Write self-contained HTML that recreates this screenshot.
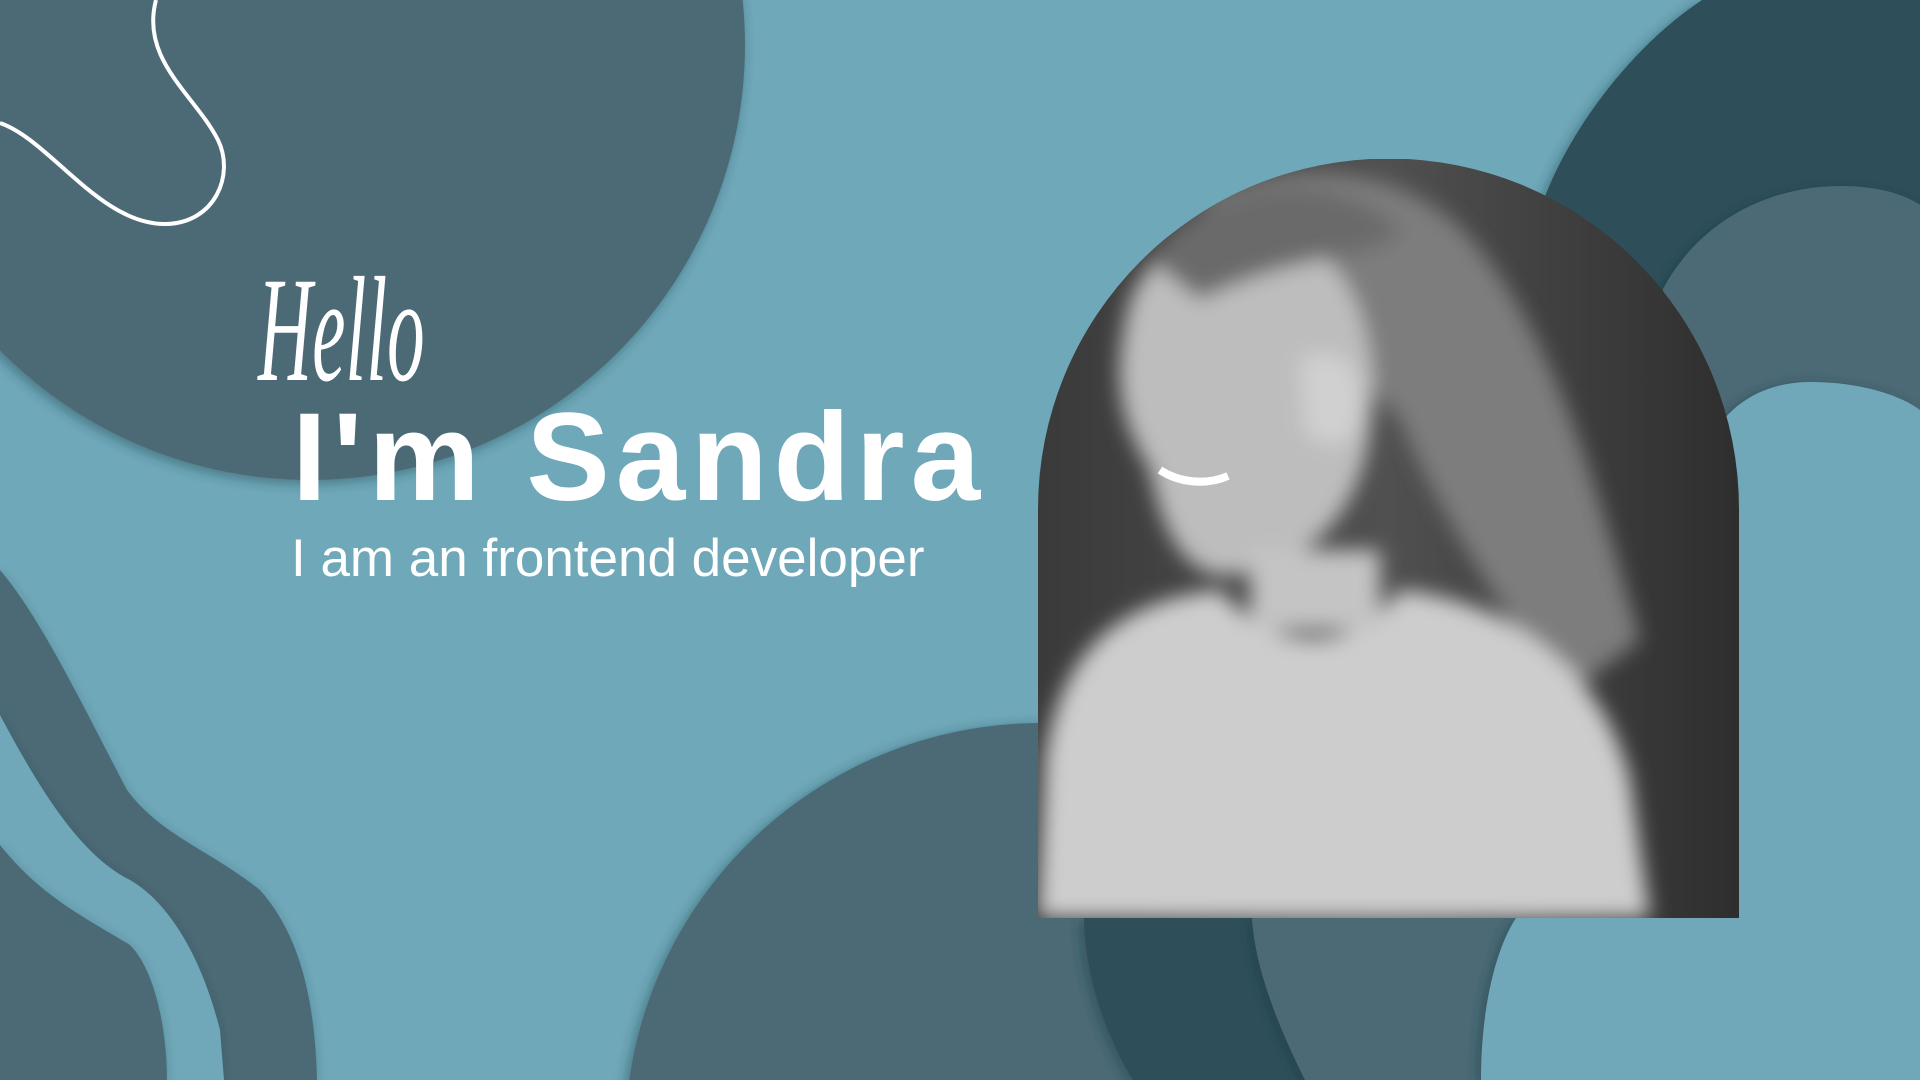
<!DOCTYPE html>
<html><head><meta charset="utf-8">
<style>
html,body{margin:0;padding:0;width:1920px;height:1080px;overflow:hidden;background:#6fa8b9;position:relative}
svg{position:absolute;left:0;top:0}
.t{position:absolute;color:#fff;font-family:"Liberation Sans",sans-serif;white-space:nowrap}
</style></head><body>
<svg width="1920" height="1080" viewBox="0 0 1920 1080">
<defs>
<filter id="sh" x="-20%" y="-20%" width="140%" height="140%"><feDropShadow dx="-3" dy="3" stdDeviation="6" flood-color="#1c3038" flood-opacity="0.45"/></filter>
<filter id="bl"><feGaussianBlur stdDeviation="10"/></filter>
<clipPath id="arch"><path d="M1038,918 L1038,509 A350,350 0 0 1 1739,509 L1739,918 Z"/></clipPath>
<linearGradient id="bg" x1="0" y1="0" x2="1" y2="0"><stop offset="0" stop-color="#3a3a3a"/><stop offset="0.5" stop-color="#505050"/><stop offset="1" stop-color="#2e2e2e"/></linearGradient>
</defs>
<rect width="1920" height="1080" fill="#6fa8b9"/>
<circle cx="310" cy="45" r="435" fill="#4b6b76" filter="url(#sh)"/>
<path d="M0,570 C40,617 80,700 127,790 C160,835 210,850 260,890 C300,935 315,1000 317,1080 L0,1080 Z" fill="#4b6b76" filter="url(#sh)"/>
<path d="M0,715 C40,790 80,855 130,880 C165,900 200,950 220,1030 L224,1080 L0,1080 Z" fill="#6fa8b9" filter="url(#sh)"/>
<path d="M0,845 C40,895 80,915 130,945 C155,970 167,1030 167,1080 L0,1080 Z" fill="#4b6b76" filter="url(#sh)"/>
<circle cx="1041" cy="1139" r="416" fill="#4b6b76" filter="url(#sh)"/>
<path d="M1702,0 C1628,49 1567,135 1543,202 L1543,918 L1084,918 C1084,967 1102,1030 1133,1080 L1920,1080 L1920,0 Z" fill="#2f4f5a" filter="url(#sh)"/>
<path d="M1663,289 C1700,220 1770,186 1840,186 C1880,186 1905,195 1920,205 L1920,1080 L1305,1080 C1280,1030 1255,970 1252,918 L1663,918 Z" fill="#4b6b76" filter="url(#sh)"/>
<path d="M1725,418 C1745,395 1775,382 1810,382 C1860,382 1900,395 1920,410 L1920,1080 L1481,1080 C1481,1010 1495,950 1516,918 L1725,918 Z" fill="#6fa8b9" filter="url(#sh)"/>
<path d="M0,123 C50,140 100,225 166,224 C215,223 235,175 218,140 C195,95 140,60 156,0" fill="none" stroke="#fff" stroke-width="4"/>
<g clip-path="url(#arch)">
<rect x="1038" y="159" width="701" height="760" fill="url(#bg)"/>
<g filter="url(#bl)">
<path d="M1200,200 C1300,150 1420,170 1480,250 C1560,350 1600,500 1640,640 L1560,700 C1500,600 1440,520 1400,420 Z" fill="#7d7d7d"/>
<path d="M1130,300 C1160,230 1230,210 1300,240 C1360,270 1380,350 1370,430 C1360,520 1300,570 1230,575 C1180,578 1160,520 1150,470 C1120,420 1110,380 1130,300 Z" fill="#bdbdbd"/>
<path d="M1150,260 C1200,180 1330,160 1400,230 C1380,260 1300,250 1200,300 Z" fill="#6a6a6a"/>
<path d="M1300,360 C1340,340 1370,370 1360,420 C1350,450 1320,450 1305,430 Z" fill="#d0d0d0"/>
<path d="M1045,760 C1060,650 1120,600 1220,590 C1270,650 1350,660 1400,590 C1500,600 1600,660 1630,780 L1650,918 L1038,918 Z" fill="#cdcdcd"/>
<rect x="1250" y="550" width="130" height="80" fill="#c4c4c4"/>
</g>
<path d="M1160,470 C1178,482 1205,486 1228,476" stroke="#fff" stroke-width="8" fill="none"/>
</g>
</svg>
<div class="t" style="left:258px;top:255px;font-family:'Liberation Serif',serif;font-style:italic;font-size:150px;line-height:1;transform:scaleX(0.5);transform-origin:left top">Hello</div>
<div class="t" style="left:292px;top:395px;font-size:125px;font-weight:bold;letter-spacing:6px;line-height:1">I'm Sandra</div>
<div class="t" style="left:291px;top:532px;font-size:53px;letter-spacing:0;line-height:1">I am an frontend developer</div>
</body></html>
